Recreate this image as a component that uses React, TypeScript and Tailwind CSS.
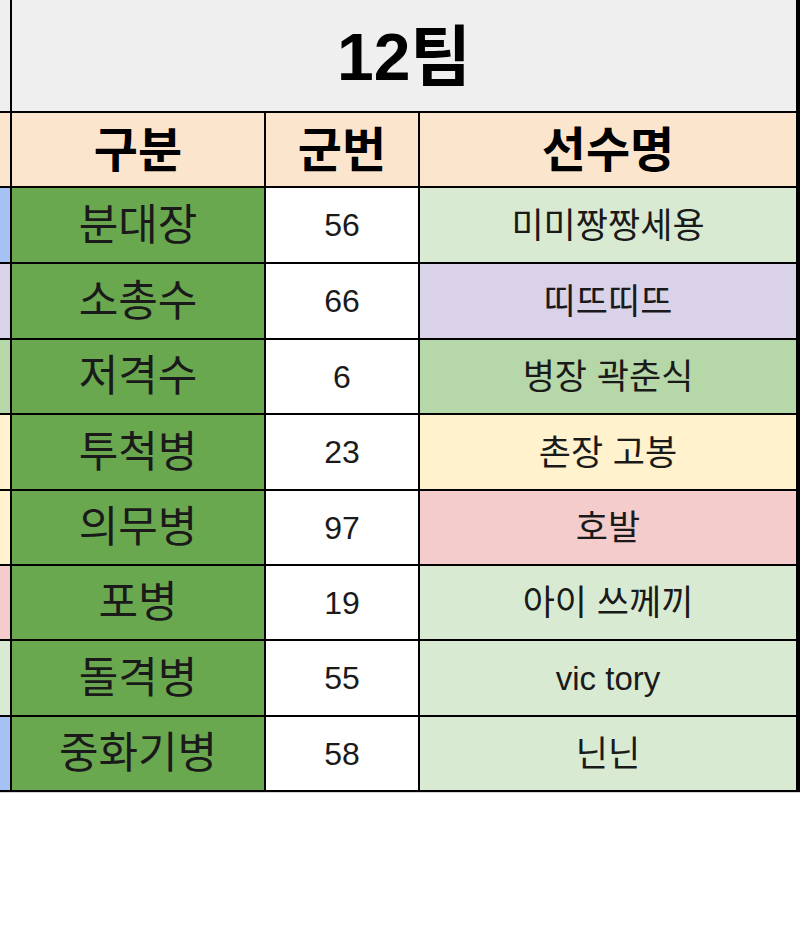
import React from 'react';

type Row = {
  role: string;
  num: string;
  name: string;
  nameBg: string;
  sideBg: string;
  h: string;
  nameSize: string;
};

const rows: Row[] = [
  { role: '분대장', num: '56', name: '미미짱짱세용', nameBg: 'bg-[#d9ead3]', sideBg: 'bg-[#a4c2f4]', h: 'h-[74px]', nameSize: 'text-[35px]' },
  { role: '소총수', num: '66', name: '띠뜨띠뜨', nameBg: 'bg-[#d9d2e9]', sideBg: 'bg-[#d9d2e9]', h: 'h-[74px]', nameSize: 'text-[35px]' },
  { role: '저격수', num: '6', name: '병장 곽춘식', nameBg: 'bg-[#b6d7a8]', sideBg: 'bg-[#b6d7a8]', h: 'h-[73px]', nameSize: 'text-[35px]' },
  { role: '투척병', num: '23', name: '촌장 고봉', nameBg: 'bg-[#fff2cc]', sideBg: 'bg-[#fff2cc]', h: 'h-[74px]', nameSize: 'text-[35px]' },
  { role: '의무병', num: '97', name: '호발', nameBg: 'bg-[#f4cccc]', sideBg: 'bg-[#fff2cc]', h: 'h-[73px]', nameSize: 'text-[35px]' },
  { role: '포병', num: '19', name: '아이 쓰께끼', nameBg: 'bg-[#d9ead3]', sideBg: 'bg-[#f4cccc]', h: 'h-[73px]', nameSize: 'text-[35px]' },
  { role: '돌격병', num: '55', name: 'vic tory', nameBg: 'bg-[#d9ead3]', sideBg: 'bg-[#d9ead3]', h: 'h-[74px]', nameSize: 'text-[33px]' },
  { role: '중화기병', num: '58', name: '닌닌', nameBg: 'bg-[#d9ead3]', sideBg: 'bg-[#a4c2f4]', h: 'h-[73px]', nameSize: 'text-[35px]' },
];

function App() {
  return (
    <div
      className="w-[800px] h-[927px] bg-white"
      style={{ fontFamily: '"Liberation Sans", "Noto Sans CJK KR", sans-serif' }}
    >
      <div className="border-b border-[#d4d4d4]">
        <div className="grid grid-cols-[10px_252px_152px_376px] gap-[2px] bg-black pr-[4px] pb-[2px] text-[#1a1a1a]">
          {/* title */}
          <div className="h-[111px] bg-[#efefef]" />
          <div className="col-span-3 h-[111px] bg-[#efefef] flex items-center justify-center pt-[2px]">
            <span className="text-[66px] font-bold text-black leading-none">12팀</span>
          </div>

          {/* header */}
          <div className="h-[73px] bg-[#fce5cd]" />
          <div className="bg-[#fce5cd] flex items-center justify-center pt-[2px]">
            <span className="text-[48px] font-bold text-black leading-none">구분</span>
          </div>
          <div className="bg-[#fce5cd] flex items-center justify-center pt-[2px]">
            <span className="text-[48px] font-bold text-black leading-none">군번</span>
          </div>
          <div className="bg-[#fce5cd] flex items-center justify-center pt-[2px]">
            <span className="text-[48px] font-bold text-black leading-none">선수명</span>
          </div>

          {rows.map((r) => (
            <React.Fragment key={r.role}>
              <div className={`${r.h} ${r.sideBg}`} />
              <div className="bg-[#6aa84f] flex items-center justify-center">
                <span className="text-[43px] leading-none">{r.role}</span>
              </div>
              <div className="bg-white flex items-center justify-center">
                <span className="text-[32px] leading-none">{r.num}</span>
              </div>
              <div className={`${r.nameBg} flex items-center justify-center`}>
                <span className={`${r.nameSize} leading-none`}>{r.name}</span>
              </div>
            </React.Fragment>
          ))}
        </div>
      </div>
    </div>
  );
}

export default App;
